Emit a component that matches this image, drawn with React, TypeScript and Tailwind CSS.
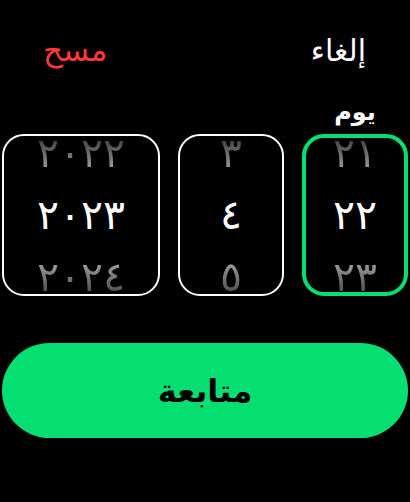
const font = { fontFamily: '"DejaVu Sans", "Noto Sans", sans-serif' };

type Col = { prev: string; cur: string; next: string; active?: boolean; wide?: boolean };

const columns: Col[] = [
  { prev: "٢١", cur: "٢٢", next: "٢٣", active: true },
  { prev: "٣", cur: "٤", next: "٥" },
  { prev: "٢٠٢٢", cur: "٢٠٢٣", next: "٢٠٢٤", wide: true },
];

function Wheel({ col }: { col: Col }) {
  return (
    <div
      className={`flex h-[162px] flex-col items-center justify-center overflow-hidden rounded-[22px] ${
        col.active ? "border-4 border-[#05df72]" : "border-2 border-white"
      } ${col.wide ? "flex-1" : "w-[106px]"}`}
    >
      <span className="flex h-[62px] shrink-0 items-center bg-linear-to-b from-[#111] to-[#d4d4d4] bg-clip-text text-[41px] leading-none text-transparent">
        {col.prev}
      </span>
      <span className="flex h-[62px] shrink-0 items-center text-[41px] leading-none text-white">
        {col.cur}
      </span>
      <span className="flex h-[62px] shrink-0 items-center bg-linear-to-b from-[#cfcfcf] to-[#2a2a2a] bg-clip-text text-[41px] leading-none text-transparent">
        {col.next}
      </span>
    </div>
  );
}

export default function App() {
  return (
    <div dir="rtl" style={font} className="h-[502px] w-[410px] overflow-hidden bg-black">
      {/* top actions */}
      <div className="flex items-center justify-between pl-[43px] pr-[44px] pt-[28px]">
        <span className="text-[30px] leading-[45px] text-white">إلغاء</span>
        <span className="text-[31px] leading-[45px] text-[#ff3b30]">مسح</span>
      </div>

      {/* label */}
      <div className="mt-[27px] px-[2px]">
        <div className="w-[106px] text-center text-[24px] font-bold leading-[24px] text-white">يوم</div>
      </div>

      {/* wheels */}
      <div className="mt-[10px] flex gap-[18px] px-[2px]">
        {columns.map((c, i) => (
          <Wheel key={i} col={c} />
        ))}
      </div>

      {/* continue */}
      <div className="mt-[47px] px-[2px]">
        <button
          type="button"
          className="flex h-[95px] w-full items-center justify-center rounded-full bg-[#05df72] text-[32px] font-bold text-black"
        >
          متابعة
        </button>
      </div>
    </div>
  );
}
